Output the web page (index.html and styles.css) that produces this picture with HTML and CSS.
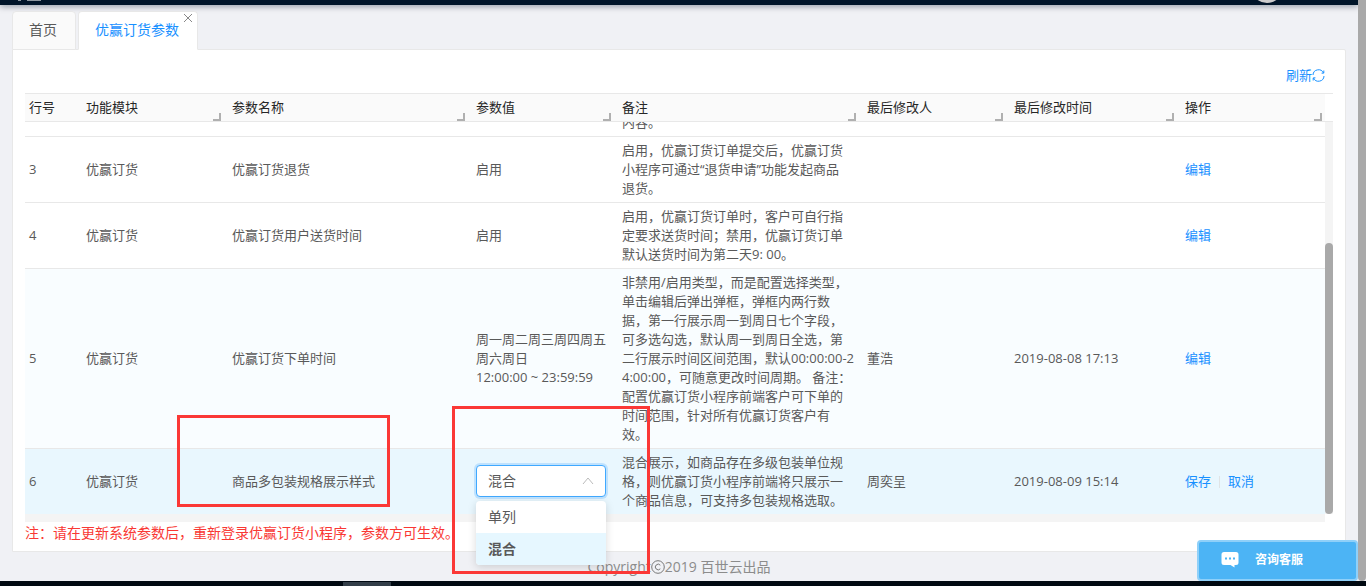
FILE: index.html
```html
<!DOCTYPE html>
<html lang="zh-CN">
<head>
<meta charset="utf-8">
<title>优赢订货参数</title>
<link rel="stylesheet" href="styles.css">
</head>
<body>
<div class="window">
  <div class="page">
    <header class="topbar">
      <svg class="brand" width="24" height="3" viewBox="0 0 24 3" aria-hidden="true"><path d="M0 0h3v1h-3zM9 0h14v1h-14z" fill="#8d979f"/></svg>
      <svg class="avatar" width="30" height="3" viewBox="0 0 30 3" aria-hidden="true"><circle cx="15" cy="-13" r="16" fill="#ccc"/></svg>
    </header>
    <nav class="tabs">
      <a class="tab" href="#home">首页</a>
      <a class="tab active" href="#params">优赢订货参数</a>
      <button class="tab-close" aria-label="关闭"><svg width="10" height="10" viewBox="0 0 10 10"><path d="M1 1l8 8M9 1l-8 8" stroke="#888" fill="none"/></svg></button>
    </nav>
    <main class="card">
      <div class="toolbar">
        <button class="link">刷新<svg width="13" height="13" viewBox="0 0 13 13"><path d="M1 6a5.500 5.500 0 0 1 10.500-2M12 7a5.500 5.500 0 0 1-10.500 2M11.800 1.500v2.600l-2.200.1M1.200 11.500V8.900l2.200-.1" fill="none" stroke="#1890ff" stroke-width="1"/></svg></button>
      </div>
      <div class="grid">
        <div class="grid-head">
          <table>
            <colgroup><col class="c-no"><col class="c-module"><col class="c-name"><col class="c-value"><col class="c-remark"><col class="c-user"><col class="c-time"><col></colgroup>
            <thead><tr>
              <th>行号</th>
              <th>功能模块<i class="grip"></i></th>
              <th>参数名称<i class="grip"></i></th>
              <th>参数值<i class="grip"></i></th>
              <th>备注<i class="grip"></i></th>
              <th>最后修改人<i class="grip"></i></th>
              <th>最后修改时间<i class="grip"></i></th>
              <th>操作<i class="grip"></i></th>
            </tr></thead>
          </table>
        </div>
        <div class="grid-main">
          <div class="grid-body">
            <table>
              <colgroup><col class="c-no"><col class="c-module"><col class="c-name"><col class="c-value"><col class="c-remark"><col class="c-user"><col class="c-time"><col></colgroup>
              <tbody>
                <tr><td></td><td></td><td></td><td></td><td>内容。</td><td></td><td></td><td></td></tr>
                <tr><td>3</td><td>优赢订货</td><td>优赢订货退货</td><td>启用</td><td>启用，优赢订货订单提交后，优赢订货<br>小程序可通过“退货申请”功能发起商品<br>退货。</td><td></td><td></td><td><button class="link">编辑</button></td></tr>
                <tr><td>4</td><td>优赢订货</td><td>优赢订货用户送货时间</td><td>启用</td><td>启用，优赢订货订单时，客户可自行指<br>定要求送货时间；禁用，优赢订货订单<br>默认送货时间为第二天9: 00。</td><td></td><td></td><td><button class="link">编辑</button></td></tr>
                <tr class="tinted"><td>5</td><td>优赢订货</td><td>优赢订货下单时间</td><td>周一周二周三周四周五<br>周六周日<br>12:00:00 ~ 23:59:59</td><td>非禁用/启用类型，而是配置选择类型，<br>单击编辑后弹出弹框，弹框内两行数<br>据，第一行展示周一到周日七个字段，<br>可多选勾选，默认周一到周日全选，第<br>二行展示时间区间范围，默认00:00:00-2<br>4:00:00，可随意更改时间周期。 备注：<br>配置优赢订货小程序前端客户可下单的<br>时间范围，针对所有优赢订货客户有<br>效。</td><td>董浩</td><td>2019-08-08 17:13</td><td><button class="link">编辑</button></td></tr>
                <tr class="editing"><td>6</td><td>优赢订货</td><td>商品多包装规格展示样式</td><td class="field">
                  <select class="select" aria-label="参数值"><option>混合</option><option>单列</option></select>
                  <svg class="caret" width="12" height="8" viewBox="0 0 12 8" aria-hidden="true"><path d="M1 7l5-6 5 6" fill="none" stroke="#bbb"/></svg>
                </td><td>混合展示，如商品存在多级包装单位规<br>格，则优赢订货小程序前端将只展示一<br>个商品信息，可支持多包装规格选取。</td><td>周奕呈</td><td>2019-08-09 15:14</td><td><span class="actions"><button class="link">保存</button><i class="divider"></i><button class="link">取消</button></span></td></tr>
              </tbody>
            </table>
          </div>
          <div class="grid-scroll"><div class="grid-thumb"></div></div>
        </div>
        <div class="grid-hscroll"></div>
      </div>
      <p class="note">注：请在更新系统参数后，重新登录优赢订货小程序，参数方可生效。</p>
    </main>
    <footer class="footer">Copyright<svg width="14" height="14" viewBox="0 0 14 14" aria-hidden="true"><circle cx="7" cy="7" r="6.300"/><path d="M9.300 5.200a2.800 2.800 0 1 0 0 3.600"/></svg>2019 百世云出品</footer>
  </div>
  <div class="page-scroll"></div>
</div>
<div class="taskbar"><div class="taskbar-item"></div></div>

<ul class="menu">
  <li><button class="menu-item">单列</button></li>
  <li><button class="menu-item selected">混合</button></li>
</ul>
<div class="mark mark-name"></div>
<div class="mark mark-value"></div>
<button class="chat"><svg width="18" height="16" viewBox="0 0 18 16" aria-hidden="true"><path d="M3 0h12a2.500 2.500 0 0 1 2.500 2.500v8A2.500 2.500 0 0 1 15 13h-1.500v2.500L9.500 13H3A2.500 2.500 0 0 1 .5 10.500v-8A2.500 2.500 0 0 1 3 0z" fill="#fff"/><path d="M4 5.500h2v2H4zM8 5.500h2v2H8zM12 5.500h2v2h-2z" fill="#4cb4f5"/></svg>咨询客服</button>
</body>
</html>
```

FILE: styles.css
```css
* { box-sizing: border-box; }
body {
  margin: 0;
  min-height: 100vh;
  display: flex;
  flex-direction: column;
  position: relative;
  overflow: hidden;
  font: 13px/19px "Open Sans", "Noto Sans CJK SC", sans-serif;
  color: #595959;
  background: #f0f2f5;
}
button { font: inherit; border: 0; padding: 0; background: none; cursor: pointer; }
.window { flex: 1; display: flex; background: #f0f1f5; }
.page { flex: 1; min-width: 0; display: flex; flex-direction: column; }
.page-scroll { width: 8px; background: #a9a9a9; border-radius: 0 0 4px 4px; }

.topbar {
  height: 5px;
  padding: 0 76px 0 18px;
  display: flex;
  justify-content: space-between;
  background: #001529;
  box-shadow: 0 1px 6px rgba(0, 21, 41, .5);
}
.tabs { display: flex; margin: 6px 12px 0; gap: 2px; position: relative; z-index: 1; }
.tab {
  height: 39px;
  padding: 0 18px 0 16px;
  font-size: 14px;
  line-height: 36px;
  color: #595959;
  text-decoration: none;
  background: #fafafa;
  border: 1px solid #e8e8e8;
  border-radius: 4px 4px 0 0;
}
.tab.active { color: #1890ff; background: #fff; border-bottom-color: #fff; }
.tab-close { width: 10px; height: 14px; margin-left: -17px; display: flex; align-items: center; }

.card {
  margin: -1px 12px 0;
  padding: 0 12px;
  background: #fff;
  border: 1px solid #e8e8e8;
  border-radius: 0 2px 0 0;
}
.toolbar { height: 43px; padding: 16px 8px 0 0; display: flex; justify-content: flex-end; align-items: flex-start; }
.link { color: #1890ff; display: inline-flex; align-items: center; }

table { width: 100%; table-layout: fixed; border-collapse: separate; border-spacing: 0; }
.c-no { width: 57px; }
.c-module, .c-value { width: 146px; }
.c-name { width: 244px; }
.c-remark { width: 245px; }
.c-user { width: 147px; }
.c-time { width: 171px; }
.grid-head { border: solid #e8e8e8; border-width: 1px 0; padding-right: 8px; }
th {
  position: relative;
  padding: 4px;
  text-align: left;
  font-weight: 400;
  color: #262626;
  background: #fafafa;
}
.grip {
  position: absolute;
  right: 7px;
  bottom: 0;
  width: 8px;
  height: 8px;
  border: solid #b0b0b0;
  border-width: 0 2px 2px 0;
}
th:last-child .grip { right: 3px; }
.grid-main { display: flex; height: 392px; }
.grid-body { flex: 1; overflow: hidden; display: flex; flex-direction: column; justify-content: flex-end; }
td { padding: 4px; white-space: nowrap; border-bottom: 1px solid #e8e8e8; vertical-align: middle; }
.tinted td { background: #f9fdff; }
.editing td { background: #e9f7fe; border-bottom: 0; }
.grid-scroll { width: 8px; background: #f4f4f4; display: flex; align-items: flex-end; }
.grid-thumb { width: 8px; height: 271px; border-radius: 4px; background: #a9a9a9; }
.grid-hscroll { height: 8px; margin-right: 8px; background: #f4f4f4; }
.actions { display: flex; align-items: center; gap: 8px; }
.divider { width: 1px; height: 12px; background: #e0e4e6; }

.editing .field { position: relative; padding-bottom: 6px; }
.select {
  appearance: none;
  display: block;
  width: 130px;
  height: 32px;
  padding: 0 11px;
  font: inherit;
  font-size: 14px;
  color: #595959;
  background: #fff;
  border: 1px solid #40a9ff;
  border-radius: 4px;
  box-shadow: 0 0 0 2px rgba(24, 144, 255, .2);
}
.caret { position: absolute; right: 24px; top: 28px; }
.menu {
  position: absolute;
  left: 476px;
  top: 501px;
  width: 130px;
  margin: 0;
  padding: 0;
  list-style: none;
  background: #fff;
  border-radius: 4px;
  overflow: hidden;
  box-shadow: 0 2px 8px rgba(0, 0, 0, .15);
}
.menu-item { display: block; width: 100%; height: 32px; padding: 0 12px 2px; text-align: left; font-size: 14px; color: #595959; }
.menu-item.selected { background: #e6f7ff; font-weight: 700; }

.note { margin: 0; height: 29px; font-size: 14px; line-height: 22px; color: #f93834; }
.footer {
  height: 29px;
  display: flex;
  justify-content: center;
  align-items: center;
  font-size: 14px;
  color: #8c8c8c;
}
.footer svg { fill: none; stroke: #777; }
.taskbar { height: 5px; padding-top: 1px; background: #000911; }
.taskbar-item { width: 48px; height: 4px; margin-left: 343px; background: #333e48; }

.mark { position: absolute; border: 3px solid #fb3836; pointer-events: none; }
.mark-name { left: 177px; top: 415px; width: 213px; height: 92px; }
.mark-value { left: 452px; top: 406px; width: 198px; height: 168px; }
.chat {
  position: absolute;
  right: 8px;
  bottom: 5px;
  width: 161px;
  height: 41px;
  padding: 0 22px 2px;
  display: flex;
  align-items: center;
  gap: 16px;
  font-size: 12px;
  font-weight: 700;
  color: #fff;
  background: #4cb4f5;
  border: 2px solid #8fd0f9;
  border-radius: 4px;
}
```
